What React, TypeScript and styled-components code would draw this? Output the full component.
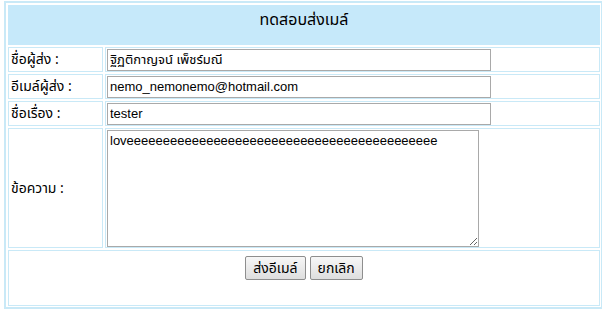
import styled, { createGlobalStyle } from "styled-components";

const GlobalStyle = createGlobalStyle`
  html, body {
    margin: 0;
    padding: 0;
    background: #ffffff;
  }
  body {
    padding: 1px 0 0 4px;
    font-family: Tahoma, "Noto Sans Thai", "Liberation Sans", sans-serif;
  }
`;

const thaiFont = `Tahoma, "Noto Sans Thai", "Noto Sans Thai UI", "Liberation Sans", sans-serif`;
const lineBlue = "#c9e9f7";

function App() {
  return (
    <>
      <GlobalStyle />
      <MailForm onSubmit={(e) => e.preventDefault()}>
        <HeaderCell>ทดสอบส่งเมล์</HeaderCell>

        <LabelCell>ชื่อผู้ส่ง :</LabelCell>
        <FieldCell>
          <TextInput defaultValue="ฐิฏติกาญจน์ เพ็ชร์มณี" />
        </FieldCell>

        <LabelCell>อีเมล์ผู้ส่ง :</LabelCell>
        <FieldCell>
          <TextInput defaultValue="nemo_nemonemo@hotmail.com" />
        </FieldCell>

        <LabelCell>ชื่อเรื่อง :</LabelCell>
        <FieldCell>
          <TextInput defaultValue="tester" />
        </FieldCell>

        <LabelCell>ข้อความ :</LabelCell>
        <FieldCell>
          <MessageBox defaultValue="loveeeeeeeeeeeeeeeeeeeeeeeeeeeeeeeeeeeeeeeeeee" />
        </FieldCell>

        <ButtonCell>
          <FormButton type="submit">ส่งอีเมล์</FormButton>
          <FormButton type="reset">ยกเลิก</FormButton>
        </ButtonCell>
      </MailForm>
    </>
  );
}

export default App;

const MailForm = styled.form`
  box-sizing: border-box;
  width: 599px;
  margin: 0;
  border: 2px solid ${lineBlue};
  padding: 2px 1px 1px 2px;
  display: grid;
  grid-template-columns: 95px 495px;
  grid-template-rows: 40px 25px 25px 25px 120px 56px;
  gap: 2px;
`;

const Cell = styled.div`
  box-sizing: border-box;
  border: 1px solid ${lineBlue};
  display: flex;
  align-items: center;
`;

const HeaderCell = styled(Cell)`
  grid-column: 1 / 3;
  background: #c6e9fa;
  border-color: #c6e9fa;
  align-items: flex-start;
  justify-content: center;
  padding-top: 2px;
  font-family: ${thaiFont};
  font-size: 16px;
  color: #000;
`;

const LabelCell = styled(Cell)`
  padding-left: 2px;
  font-family: ${thaiFont};
  font-size: 14px;
  color: #000;
  white-space: nowrap;
`;

const FieldCell = styled(Cell)`
  padding-left: 1px;
`;

const TextInput = styled.input`
  box-sizing: border-box;
  width: 384px;
  height: 22px;
  margin: 0;
  padding: 1px 2px;
  border: 1px solid #a9a9a9;
  font-family: "Liberation Sans", ${thaiFont};
  font-size: 13px;
  color: #000;
  outline: none;
`;

const MessageBox = styled.textarea`
  box-sizing: border-box;
  width: 372px;
  height: 117px;
  margin: 0;
  padding: 2px;
  border: 1px solid #a9a9a9;
  font-family: "Liberation Sans", ${thaiFont};
  font-size: 13px;
  color: #000;
  outline: none;
  resize: both;
`;

const ButtonCell = styled(Cell)`
  grid-column: 1 / 3;
  align-items: flex-start;
  justify-content: center;
  gap: 4px;
  padding-top: 5px;
`;

const FormButton = styled.button`
  box-sizing: border-box;
  height: 24px;
  margin: 0;
  padding: 0 7px;
  border: 1px solid #8e8e8e;
  border-radius: 2px;
  background: linear-gradient(#f7f7f7, #dedede);
  font-family: ${thaiFont};
  font-size: 14px;
  color: #000;
  cursor: pointer;
`;
